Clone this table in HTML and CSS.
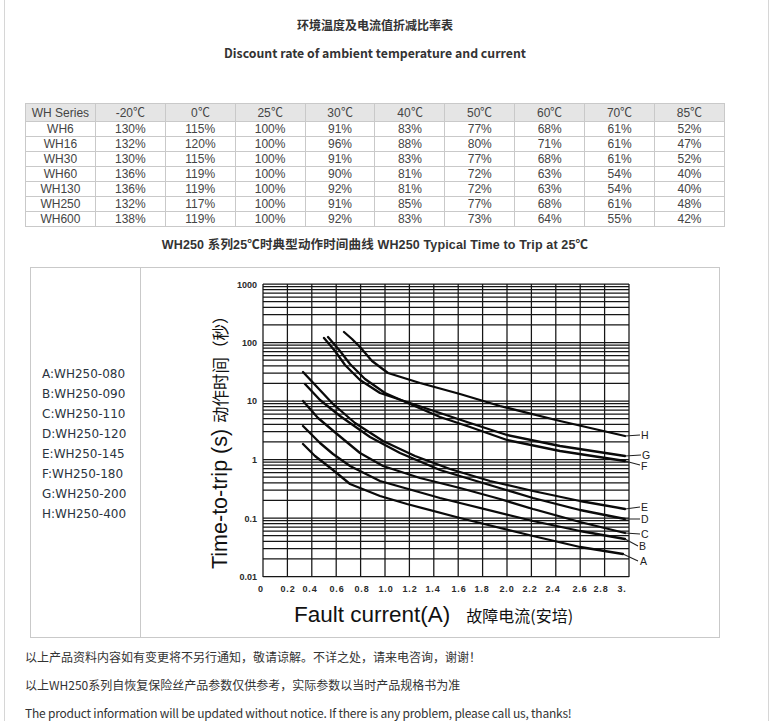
FILE: index.html
```html
<!DOCTYPE html>
<html lang="zh-CN">
<head>
<meta charset="utf-8">
<title>WH250</title>
<link rel="stylesheet" href="styles.css">
</head>
<body>
<div class="page">
  <div class="content">
    <p class="title">环境温度及电流值折减比率表</p>
    <p class="title title-en">Discount rate of ambient temperature and current</p>
    <table class="rate">
      <thead>
        <tr><th>WH Series</th><th>-20℃</th><th>0℃</th><th>25℃</th><th>30℃</th><th>40℃</th><th>50℃</th><th>60℃</th><th>70℃</th><th>85℃</th></tr>
      </thead>
      <tbody>
        <tr><td>WH6</td><td>130%</td><td>115%</td><td>100%</td><td>91%</td><td>83%</td><td>77%</td><td>68%</td><td>61%</td><td>52%</td></tr>
        <tr><td>WH16</td><td>132%</td><td>120%</td><td>100%</td><td>96%</td><td>88%</td><td>80%</td><td>71%</td><td>61%</td><td>47%</td></tr>
        <tr><td>WH30</td><td>130%</td><td>115%</td><td>100%</td><td>91%</td><td>83%</td><td>77%</td><td>68%</td><td>61%</td><td>52%</td></tr>
        <tr><td>WH60</td><td>136%</td><td>119%</td><td>100%</td><td>90%</td><td>81%</td><td>72%</td><td>63%</td><td>54%</td><td>40%</td></tr>
        <tr><td>WH130</td><td>136%</td><td>119%</td><td>100%</td><td>92%</td><td>81%</td><td>72%</td><td>63%</td><td>54%</td><td>40%</td></tr>
        <tr><td>WH250</td><td>132%</td><td>117%</td><td>100%</td><td>91%</td><td>85%</td><td>77%</td><td>68%</td><td>61%</td><td>48%</td></tr>
        <tr><td>WH600</td><td>138%</td><td>119%</td><td>100%</td><td>92%</td><td>83%</td><td>73%</td><td>64%</td><td>55%</td><td>42%</td></tr>
      </tbody>
    </table>
    <p class="subtitle">WH250 系列25℃时典型动作时间曲线 WH250 Typical Time to Trip at 25℃</p>
    <div class="chart-box">
      <div class="legend">
        <p>A:WH250-080</p>
        <p>B:WH250-090</p>
        <p>C:WH250-110</p>
        <p>D:WH250-120</p>
        <p>E:WH250-145</p>
        <p>F:WH250-180</p>
        <p>G:WH250-200</p>
        <p>H:WH250-400</p>
      </div>
      <div class="chart">
        <svg class="plot" width="579" height="369" viewBox="141 267 579 369" xmlns="http://www.w3.org/2000/svg">
          <g class="grid">
            <path d="M263 283H629M263 285.7H629M263 288.7H629M263 292.1H629M263 296H629M263 300.6H629M263 306.3H629M263 313.6H629M263 323.9H629
                     M263 341.5H629M263 344.2H629M263 347.2H629M263 350.6H629M263 354.5H629M263 359.1H629M263 364.8H629M263 372.1H629M263 382.4H629
                     M263 400H629M263 402.7H629M263 405.7H629M263 409.1H629M263 413H629M263 417.6H629M263 423.3H629M263 430.6H629M263 440.9H629
                     M263 458.5H629M263 461.2H629M263 464.2H629M263 467.6H629M263 471.5H629M263 476.1H629M263 481.8H629M263 489.1H629M263 499.4H629
                     M263 517H629M263 519.7H629M263 522.7H629M263 526.1H629M263 530H629M263 534.6H629M263 540.3H629M263 547.6H629M263 557.9H629
                     M263 575.5H629"/>
            <path d="M263 283V576M287.4 283V576M311.8 283V576M336.2 283V576M360.6 283V576M385 283V576M409.4 283V576M433.8 283V576
                     M458.2 283V576M482.6 283V576M507 283V576M531.4 283V576M555.8 283V576M580.2 283V576M604.6 283V576M629 283V576"/>
          </g>
          <g class="curves">
            <polyline points="344,331 352,338 360,346 372,360 388,372 420,382 460,393 500,405 560,420 625,435"/>
            <polyline points="324,337 335,350 345,364 360,379 380,392 410,402 440,412 470,422 507,434 560,445 625,455"/>
            <polyline points="328,336 340,350 350,363 365,378 385,392 410,403 440,416 470,426 507,439 560,450 625,460"/>
            <polyline points="303,371 318,387 333,403 355,422 383,440 415,455 450,468 490,480 533,490 580,500 625,508"/>
            <polyline points="305,383 320,399 340,415 370,436 400,452 440,469 473,479 533,497 580,509 625,518"/>
            <polyline points="303,400 318,417 337,433 360,452 383,465 420,477 460,487 500,498 533,508 580,521 625,532"/>
            <polyline points="303,425 320,442 333,453 350,465 380,480 440,497 460,502 533,520 580,530 625,538"/>
            <polyline points="303,443 315,455 333,469 350,483 380,495 407,503 460,517 533,535 580,546 623,553"/>
          </g>
          <g class="leaders">
            <path d="M625 435L640 434M625 455L641 454M625 460L640 464M625 508L640 506M625 518L640 518M625 532L640 533M625 538L638 545M623 553L638 560"/>
          </g>
          <g class="curve-labels">
            <text x="641" y="438">H</text>
            <text x="642" y="458">G</text>
            <text x="641" y="469">F</text>
            <text x="641" y="510">E</text>
            <text x="641" y="522">D</text>
            <text x="641" y="537">C</text>
            <text x="639" y="549">B</text>
            <text x="640" y="564">A</text>
          </g>
          <g class="ticks-y">
            <text x="257" y="287">1000</text>
            <text x="257" y="345">100</text>
            <text x="257" y="403">10</text>
            <text x="257" y="462">1</text>
            <text x="257" y="521">0.1</text>
            <text x="257" y="579">0.01</text>
          </g>
          <g class="ticks-x">
            <text x="261" y="591">0</text>
            <text x="288" y="591">0.2</text>
            <text x="310" y="591">0.4</text>
            <text x="337" y="591">0.6</text>
            <text x="362" y="591">0.8</text>
            <text x="386" y="591">1.0</text>
            <text x="410" y="591">1.2</text>
            <text x="433" y="591">1.4</text>
            <text x="459" y="591">1.6</text>
            <text x="482" y="591">1.8</text>
            <text x="507" y="591">2.0</text>
            <text x="530" y="591">2.2</text>
            <text x="553" y="591">2.4</text>
            <text x="580" y="591">2.6</text>
            <text x="601" y="591">2.8</text>
            <text x="622" y="591">3.</text>
          </g>
          <text class="axis-title axis-y" transform="translate(227 568) rotate(-90)">Time-to-trip (s) <tspan class="cjk">动作时间（秒）</tspan></text>
          <text class="axis-title axis-x" x="294" y="621">Fault current(A)<tspan class="cjk" dx="16">故障电流(安培)</tspan></text>
        </svg>
      </div>
    </div>
    <p class="note">以上产品资料内容如有变更将不另行通知，敬请谅解。不详之处，请来电咨询，谢谢！</p>
    <p class="note">以上WH250系列自恢复保险丝产品参数仅供参考，实际参数以当时产品规格书为准</p>
    <p class="note note-en">The product information will be updated without notice. If there is any problem, please call us, thanks!</p>
  </div>
</div>
</body>
</html>
```

FILE: styles.css
```css
html, body {
  margin: 0;
  padding: 0;
  background: #ffffff;
}

.page {
  margin-left: 4px;
  width: 765px;
  min-height: 721px;
  box-sizing: border-box;
  border-left: 1px solid #d6d6d6;
  border-right: 1px solid #d6d6d6;
  padding: 16px 0 1px 20px;
  color: #333333;
}

.content {
  width: 700px;
}

.title {
  margin: 0;
  text-align: center;
  font-family: "Noto Sans CJK SC", sans-serif;
  font-weight: bold;
  font-size: 12px;
  line-height: 18px;
  color: #333333;
}

.title-en {
  margin-top: 10px;
  font-size: 12.3px;
}

.rate {
  margin-top: 41px;
  width: 700px;
  border-collapse: collapse;
  table-layout: fixed;
  font-family: "Liberation Sans", sans-serif;
  font-size: 12px;
  color: #444444;
}

.rate th,
.rate td {
  border: 1px solid #c9c9c9;
  padding: 0;
  text-align: center;
  font-weight: normal;
}

.rate th {
  background: #e5e5e5;
  height: 17px;
  line-height: 16px;
}

.rate td {
  height: 14px;
  line-height: 13px;
}

.subtitle {
  margin: 9px 0 0;
  text-align: center;
  font-family: "Liberation Sans", "Noto Sans CJK SC", sans-serif;
  font-weight: bold;
  font-size: 12.5px;
  letter-spacing: 0.15px;
  line-height: 18px;
  color: #333333;
}

.chart-box {
  margin: 13px 0 0 5px;
  width: 690px;
  height: 371px;
  box-sizing: border-box;
  border: 1px solid #c9c9c9;
  display: flex;
}

.legend {
  width: 110px;
  flex: none;
  box-sizing: border-box;
  border-right: 1px solid #c9c9c9;
  padding: 96px 0 0 11px;
  font-family: "DejaVu Sans", sans-serif;
  font-size: 12px;
  line-height: 20px;
  color: #2a3440;
}

.legend p {
  margin: 0;
}

.chart {
  flex: 1;
  overflow: hidden;
}

.plot {
  display: block;
}

.grid path {
  fill: none;
  stroke: #161616;
  stroke-width: 1.25;
}

.curves polyline {
  fill: none;
  stroke: #0a0a0a;
  stroke-width: 2.3;
  stroke-linejoin: round;
  stroke-linecap: round;
}

.leaders path {
  fill: none;
  stroke: #222222;
  stroke-width: 1.1;
}

.curve-labels text {
  font-family: "Liberation Sans", sans-serif;
  font-size: 10.5px;
  fill: #222222;
}

.ticks-y text {
  font-family: "Liberation Sans", sans-serif;
  font-size: 9px;
  font-weight: bold;
  text-anchor: end;
  fill: #2a2a2a;
}

.ticks-x text {
  font-family: "Liberation Sans", sans-serif;
  font-size: 9px;
  font-weight: bold;
  letter-spacing: 0.8px;
  text-anchor: middle;
  fill: #2a2a2a;
}

.axis-title {
  font-family: "Liberation Sans", sans-serif;
  fill: #111111;
}

.axis-y {
  font-size: 21.5px;
}

.axis-x {
  font-size: 22.5px;
}

.axis-y .cjk {
  font-family: "Noto Sans CJK SC", sans-serif;
  font-size: 16.5px;
}

.axis-x .cjk {
  font-family: "Noto Sans CJK SC", sans-serif;
  font-size: 16px;
}

.note {
  margin: 10px 0 0;
  font-family: "Noto Sans CJK SC", sans-serif;
  font-size: 12px;
  line-height: 18px;
  color: #333333;
}

.note-en {
  letter-spacing: -0.22px;
}
```
